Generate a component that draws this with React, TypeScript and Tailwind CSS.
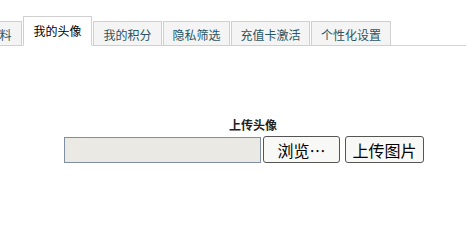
const TABS = [
    { label: "我的资料", width: "w-[69px]", active: false },
    { label: "我的头像", width: "w-[69px]", active: true },
    { label: "我的积分", width: "w-[69px]", active: false },
    { label: "隐私筛选", width: "w-[67px]", active: false },
    { label: "充值卡激活", width: "w-[79px]", active: false },
    { label: "个性化设置", width: "w-[80px]", active: false },
] as const;

const font = "font-['Noto_Sans_CJK_SC','Liberation_Sans',sans-serif]";

export default function App() {
    return (
        <div className={`h-[219px] w-[466px] overflow-hidden bg-white ${font}`}>
            {/* tab strip */}
            <div className="flex h-[46px] items-end gap-[1px] border-b border-[#d4d4d4]">
                {TABS.map((tab, i) => (
                    <div
                        key={tab.label}
                        className={[
                            "-mb-px flex shrink-0 items-center justify-center border border-[#d0d0d0] text-[12px] leading-none",
                            tab.width,
                            i === 0 ? "-ml-[47px]" : "",
                            tab.active
                                ? "h-[30px] border-b-white bg-white pb-[1px] text-black"
                                : "h-[25px] bg-[#f4f4f4] pt-[3px] text-[#2a5462]",
                        ].join(" ")}
                    >
                        {tab.label}
                    </div>
                ))}
            </div>

            {/* upload form */}
            <div className="flex flex-col items-center pt-[73px]">
                <div className="ml-[40px] text-[12px] font-bold leading-none text-[#222]">上传头像</div>
                <div className="mt-[5px] ml-[22px] flex items-center">
                    <div className="h-[26px] w-[197px] border border-[#7f8ea3] bg-[#eae9e3]" />
                    <button className="ml-[2px] h-[27px] w-[77px] rounded-[3px] border border-[#555] bg-[#f8f8f6] text-[16px] leading-none text-black">
                        浏览…
                    </button>
                    <button className="ml-[5px] h-[27px] w-[79px] rounded-[3px] border border-[#555] bg-[#f8f8f6] text-[16px] leading-none text-black">
                        上传图片
                    </button>
                </div>
            </div>
        </div>
    );
}
